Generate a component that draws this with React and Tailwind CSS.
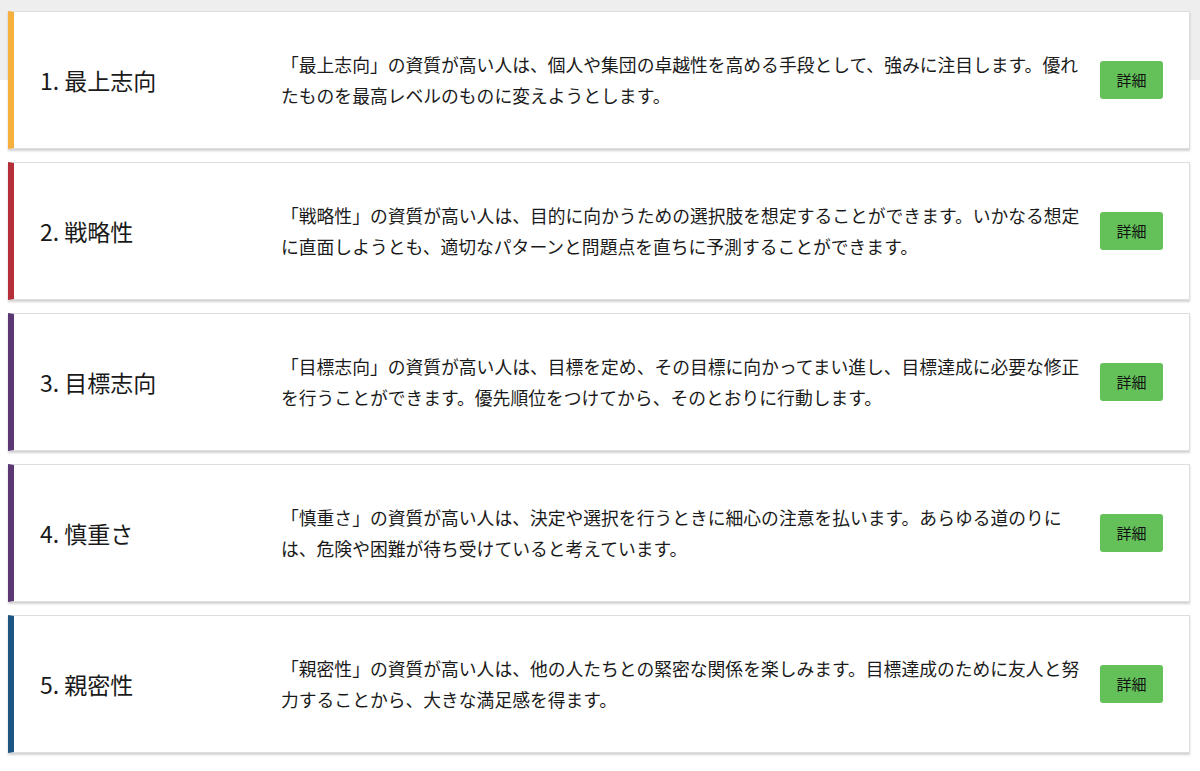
const strengths = [
  {
    no: 1,
    name: "最上志向",
    color: "border-l-[#f6b03d]",
    text: "「最上志向」の資質が高い人は、個人や集団の卓越性を高める手段として、強みに注目します。優れたものを最高レベルのものに変えようとします。",
  },
  {
    no: 2,
    name: "戦略性",
    color: "border-l-[#b52f3b]",
    text: "「戦略性」の資質が高い人は、目的に向かうための選択肢を想定することができます。いかなる想定に直面しようとも、適切なパターンと問題点を直ちに予測することができます。",
  },
  {
    no: 3,
    name: "目標志向",
    color: "border-l-[#5b3773]",
    text: "「目標志向」の資質が高い人は、目標を定め、その目標に向かってまい進し、目標達成に必要な修正を行うことができます。優先順位をつけてから、そのとおりに行動します。",
  },
  {
    no: 4,
    name: "慎重さ",
    color: "border-l-[#5b3773]",
    text: "「慎重さ」の資質が高い人は、決定や選択を行うときに細心の注意を払います。あらゆる道のりには、危険や困難が待ち受けていると考えています。",
  },
  {
    no: 5,
    name: "親密性",
    color: "border-l-[#1e5683]",
    text: "「親密性」の資質が高い人は、他の人たちとの緊密な関係を楽しみます。目標達成のために友人と努力することから、大きな満足感を得ます。",
  },
];

function StrengthCard({ item }) {
  return (
    <div
      className={`flex h-[138px] items-center border border-[#dedede] border-l-[6px] ${item.color} bg-white shadow-[0_2px_2px_rgba(0,0,0,0.18)]`}
    >
      <h2 className="w-[267px] shrink-0 pl-[26px] text-[23px] text-[#1a1a1a]">
        {item.no}. {item.name}
      </h2>
      <p className="min-w-0 flex-1 text-[17.8px] leading-[31px] text-[#1a1a1a]">
        {item.text}
      </p>
      <button className="mr-[26px] ml-[14px] h-[38px] w-[63px] shrink-0 rounded-[3px] bg-[#64c15a] text-[15px] text-[#111]">
        詳細
      </button>
    </div>
  );
}

function App() {
  return (
    <div className="min-h-screen bg-[linear-gradient(#eeeeee_80px,#ffffff_80px)] pt-[11px] pr-[10px] pb-[18px] pl-[8px] font-['Noto_Sans_CJK_JP',sans-serif]">
      <div className="flex flex-col gap-[13px]">
        {strengths.map((s) => (
          <StrengthCard key={s.no} item={s} />
        ))}
      </div>
    </div>
  );
}

export default App;
